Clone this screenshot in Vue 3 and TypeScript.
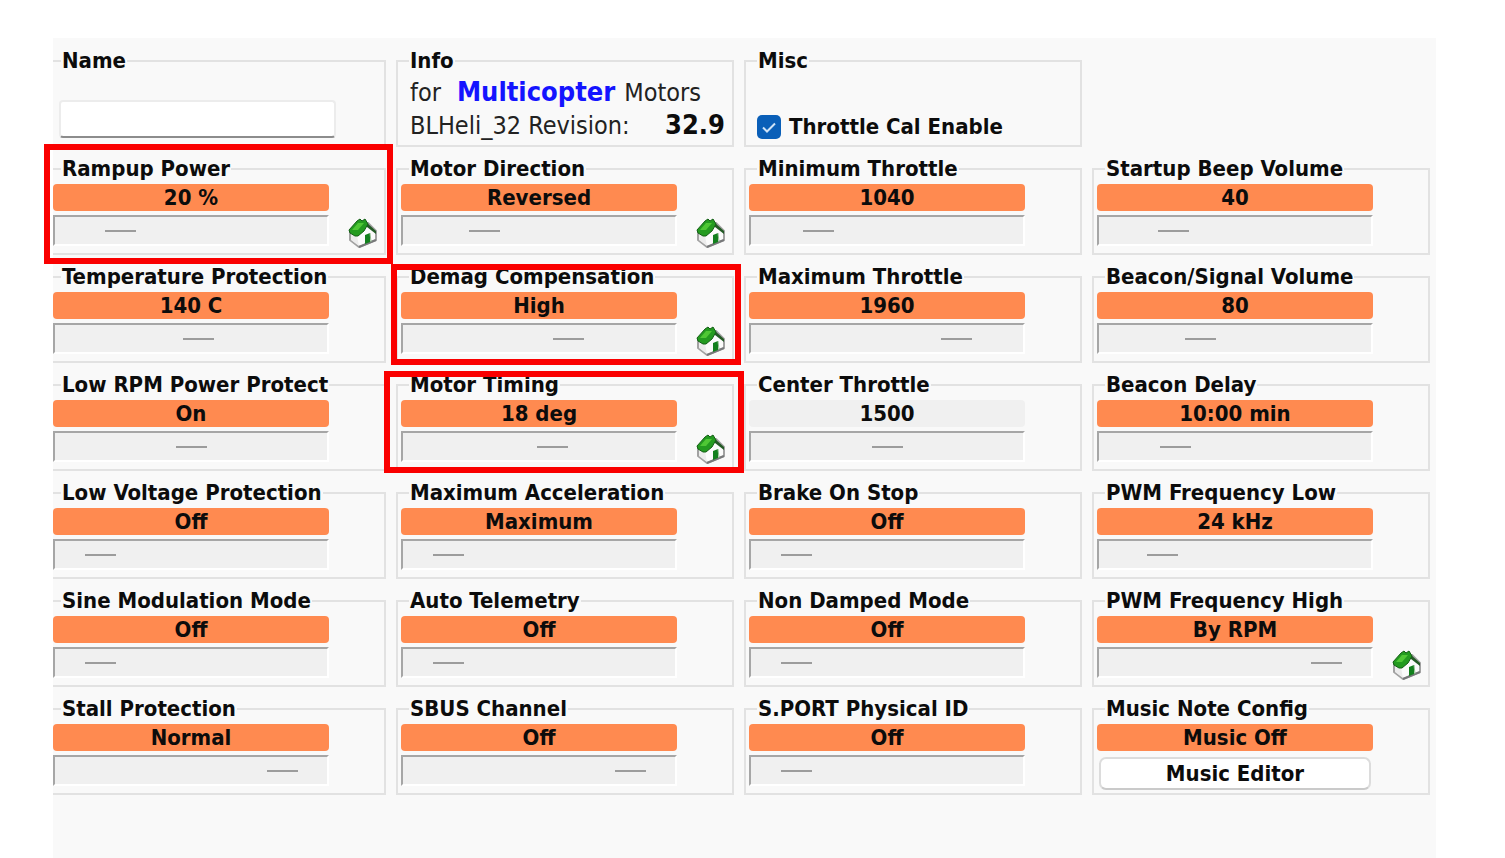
<script setup lang="ts">
interface Setting {
  id: string
  label: string
  value: string
  position?: number
  home?: boolean
  muted?: boolean
  mark?: string
  editor?: boolean
}

const settings: Setting[] = [
  { id: 'rampup', label: 'Rampup Power', value: '20 %', position: 11, home: true, mark: 'mark-rampup' },
  { id: 'direction', label: 'Motor Direction', value: 'Reversed', position: 20, home: true },
  { id: 'min-throttle', label: 'Minimum Throttle', value: '1040', position: 12 },
  { id: 'beep-volume', label: 'Startup Beep Volume', value: '40', position: 16 },
  { id: 'temperature', label: 'Temperature Protection', value: '140 C', position: 54 },
  { id: 'demag', label: 'Demag Compensation', value: 'High', position: 66, home: true, mark: 'mark-demag' },
  { id: 'max-throttle', label: 'Maximum Throttle', value: '1960', position: 88 },
  { id: 'beacon-volume', label: 'Beacon/Signal Volume', value: '80', position: 31 },
  { id: 'low-rpm', label: 'Low RPM Power Protect', value: 'On', position: 50 },
  { id: 'timing', label: 'Motor Timing', value: '18 deg', position: 57, home: true, mark: 'mark-timing' },
  { id: 'center-throttle', label: 'Center Throttle', value: '1500', position: 50, muted: true },
  { id: 'beacon-delay', label: 'Beacon Delay', value: '10:00 min', position: 17 },
  { id: 'low-voltage', label: 'Low Voltage Protection', value: 'Off', position: 0 },
  { id: 'acceleration', label: 'Maximum Acceleration', value: 'Maximum', position: 0 },
  { id: 'brake', label: 'Brake On Stop', value: 'Off', position: 0 },
  { id: 'pwm-low', label: 'PWM Frequency Low', value: '24 kHz', position: 10 },
  { id: 'sine', label: 'Sine Modulation Mode', value: 'Off', position: 0 },
  { id: 'telemetry', label: 'Auto Telemetry', value: 'Off', position: 0 },
  { id: 'non-damped', label: 'Non Damped Mode', value: 'Off', position: 0 },
  { id: 'pwm-high', label: 'PWM Frequency High', value: 'By RPM', position: 100, home: true },
  { id: 'stall', label: 'Stall Protection', value: 'Normal', position: 100 },
  { id: 'sbus', label: 'SBUS Channel', value: 'Off', position: 100 },
  { id: 'sport', label: 'S.PORT Physical ID', value: 'Off', position: 0 },
  { id: 'music', label: 'Music Note Config', value: 'Music Off', editor: true },
]
</script>

<template>
  <main class="panel">
    <form class="grid" @submit.prevent>
      <div class="cell">
        <fieldset class="group">
          <legend>Name</legend>
          <input class="name" type="text" aria-label="Name" />
        </fieldset>
      </div>
      <div class="cell">
        <fieldset class="group">
          <legend>Info</legend>
          <div class="info">
            <p><span>for</span><b class="craft">Multicopter</b><span>Motors</span></p>
            <p class="revision"><span>BLHeli_32 Revision:</span><b>32.9</b></p>
          </div>
        </fieldset>
      </div>
      <div class="cell">
        <fieldset class="group">
          <legend>Misc</legend>
          <label class="check"><input type="checkbox" checked /><svg viewBox="0 0 24 24" aria-hidden="true"><path d="M6 12.5l4 4 8-8" /></svg>Throttle Cal Enable</label>
        </fieldset>
      </div>
      <div class="cell"></div>

      <div v-for="s in settings" :key="s.id" class="cell">
        <fieldset class="group">
          <legend>{{ s.label }}</legend>
          <div class="row">
            <div class="controls">
              <output class="value" :class="{ muted: s.muted }" :for="s.id">{{ s.value }}</output>
              <button v-if="s.editor" :id="s.id" class="editor" type="button">Music Editor</button>
              <input v-else :id="s.id" class="slider" type="range" min="0" max="100" :value="s.position" :aria-label="s.label" />
            </div>
            <button v-if="s.home" class="home" type="button" :aria-label="`Reset ${s.label}`">
              <svg viewBox="0 0 30 30" aria-hidden="true">
                <path d="M2 13L2 22L11 29L28 22L28 13L20 5Z" fill="#fbfbfb" stroke="#a2a2a2" stroke-width="2" stroke-linejoin="round" />
                <path d="M3 15L9 18L11 28L3 22Z" fill="#ececec" />
                <path d="M11 29L28 22" stroke="#77787a" stroke-width="2" />
                <path d="M17 17L22 15L22 24L17 26Z" fill="#12801d" />
                <path d="M22 15L23 24" stroke="#8ebd8d" stroke-width="1" fill="none" />
                <path d="M18 4L28 13L28 16L19 9Z" fill="#235a25" />
                <path d="M1 12L9 3L12 1L14 3L17 1L20 6L16 13L10 18L7 18L2 15Z" fill="#249b20" stroke="#145f16" stroke-width="1" stroke-linejoin="round" />
                <path d="M4 12L10 5L16 5L10 12Z" fill="#4fc735" />
              </svg>
            </button>
          </div>
        </fieldset>
        <div v-if="s.mark" class="mark" :class="s.mark"></div>
      </div>
    </form>
  </main>
</template>

<style>
body {
  background: #fff;
}
</style>

<style scoped>
* {
  box-sizing: border-box;
}
.panel {
  margin: 38px 69px 0 53px;
  min-height: calc(100vh - 38px);
  padding: 9px 6px 0 0;
  background: #f9f9f9;
  color: #0c0c0c;
  font: 700 22px/28px "DejaVu Sans Condensed", "Noto Sans", sans-serif;
}
.grid {
  display: grid;
  grid-template-columns: repeat(4, minmax(0, 1fr));
  gap: 8px 10px;
  margin-left: -5px;
}
.cell {
  position: relative;
  height: 100px;
}
.group {
  height: 100%;
  min-width: 0;
  margin: 0;
  padding: 1px 5px 0 3px;
  border: 2px solid #e2e2e2;
}
.cell:nth-child(4n + 1) .group {
  margin-left: 5px;
  padding-left: 0;
  border-left: 0;
}
legend {
  margin-left: 8px;
  padding: 0 1px;
  white-space: nowrap;
}
.row {
  display: flex;
  align-items: flex-end;
}
.controls {
  flex: 1;
  min-width: 0;
  margin-right: 50px;
}
.home {
  flex: none;
  width: 30px;
  height: 30px;
  margin: 0 1px -2px -31px;
  padding: 0;
  border: 0;
  background: none;
}
.home svg {
  display: block;
  width: 30px;
  height: 30px;
}
.value {
  display: block;
  height: 27px;
  border-radius: 4px;
  background: #ff8a50;
  line-height: 28px;
  text-align: center;
}
.value.muted {
  background: #f0f0f0;
}
.slider {
  appearance: none;
  display: block;
  width: 100%;
  height: 31px;
  margin: 4px 0 0;
  padding: 0 29px 0 30px;
  border: 2px solid #fff;
  border-top-color: #a6a6a6;
  border-left-color: #a6a6a6;
  background: #f0f0f0;
}
.slider::-webkit-slider-thumb {
  appearance: none;
  width: 31px;
  height: 2px;
  background: #9c9c9c;
}
.name {
  display: block;
  width: calc(100% - 49px);
  height: 38px;
  margin: 24px 0 0 6px;
  padding: 0 8px;
  border: 2px solid #ececec;
  border-bottom-color: #8c8c8c;
  border-radius: 4px;
  background: #fff;
  font: inherit;
}
.info {
  padding: 0 2px 0 9px;
  font-size: 25px;
  font-weight: 400;
  line-height: 32px;
  color: #222;
  white-space: nowrap;
}
.info p {
  display: flex;
  margin: 0;
  align-items: baseline;
}
.info b {
  font-size: 27px;
  color: #0c0c0c;
}
.info .craft {
  margin: 0 9px 0 16px;
  color: #1414ff;
}
.revision {
  justify-content: space-between;
}
.check {
  display: flex;
  align-items: center;
  gap: 8px;
  position: relative;
  margin: 37px 0 0 8px;
}
.check input {
  appearance: none;
  width: 24px;
  height: 24px;
  margin: 0;
  border-radius: 5px;
  background: #0a5fb8;
}
.check svg {
  position: absolute;
  left: 0;
  width: 24px;
  height: 24px;
  fill: none;
  stroke: #cfe3f7;
  stroke-width: 2px;
  pointer-events: none;
  opacity: 0;
}
.check input:checked + svg {
  opacity: 1;
}
.editor {
  display: block;
  width: calc(100% - 4px);
  height: 33px;
  margin: 6px 2px 0;
  padding: 0;
  border: 2px solid #dcdcdc;
  border-bottom-color: #cacaca;
  border-radius: 7px;
  background: #fff;
  color: inherit;
  font: inherit;
}
.mark {
  position: absolute;
  z-index: 1;
  border: 6px solid #fa0000;
  pointer-events: none;
}
.mark-rampup {
  inset: -11px -7px -9px -4px;
}
.mark-demag {
  inset: 1px -7px -2px -5px;
}
.mark-timing {
  inset: 0 -10px -2px -12px;
}
</style>
